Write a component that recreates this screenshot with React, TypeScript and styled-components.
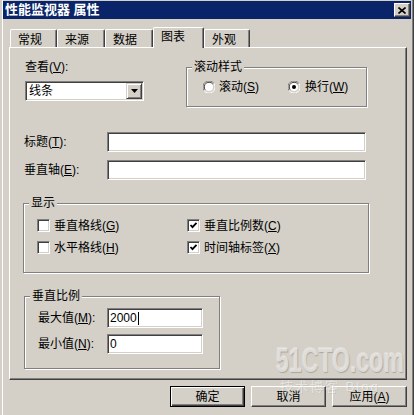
import React from "react";
import styled, { createGlobalStyle } from "styled-components";

const FACE = "#d4d0c8";
const SHADOW = "#808080";
const DARK = "#404040";

const GlobalStyle = createGlobalStyle`
  html, body { margin: 0; padding: 0; background: ${FACE}; }
  body {
    font-family: "Liberation Sans", "Noto Sans CJK SC", sans-serif;
    font-size: 12px;
    color: #000;
  }
  #root { width: 414px; height: 415px; overflow: hidden; }
`;

const Window = styled.div`
  position: relative;
  box-sizing: border-box;
  width: 414px;
  height: 415px;
  padding: 1px 3px 0;
  background: ${FACE};
  box-shadow: inset 2px 0 0 ${FACE}, inset 3px 0 0 #fff, inset -1px 0 0 ${DARK},
    inset -2px 0 0 ${SHADOW};
  overflow: hidden;
`;

const TitleBar = styled.div`
  display: flex;
  align-items: center;
  justify-content: space-between;
  height: 18px;
  padding: 0 1px 0 2px;
  background: #0a246a;
  color: #fff;
`;

const Title = styled.span`
  font-weight: bold;
  font-size: 13px;
  line-height: 14px;
`;

const CloseButton = styled.div`
  box-sizing: border-box;
  width: 16px;
  height: 14px;
  display: flex;
  align-items: center;
  justify-content: center;
  background: ${FACE};
  border-top: 1px solid #fff;
  border-left: 1px solid #fff;
  border-right: 1px solid ${DARK};
  border-bottom: 1px solid ${DARK};
  box-shadow: inset -1px -1px 0 ${SHADOW};
`;

const Body = styled.div`
  padding: 8px 4px 0 6px;
`;

const TabStrip = styled.div`
  display: flex;
  align-items: flex-end;
  height: 20px;
  padding-left: 1px;
`;

const Tab = styled.div<{ $w: number; $active?: boolean }>`
  position: relative;
  z-index: ${(p) => (p.$active ? 2 : 1)};
  box-sizing: border-box;
  width: ${(p) => p.$w}px;
  height: ${(p) => (p.$active ? 21 : 18)}px;
  margin-bottom: ${(p) => (p.$active ? -1 : 0)}px;
  padding: ${(p) => (p.$active ? 2 : 3)}px 0 0 7px;
  line-height: 14px;
  background: ${FACE};
  border-top: 1px solid #fff;
  border-left: 1px solid #fff;
  border-right: 1px solid ${DARK};
  border-top-left-radius: 2px;
  border-top-right-radius: 2px;
  box-shadow: inset -1px 0 0 ${SHADOW};
  white-space: nowrap;
`;

const Panel = styled.div`
  box-sizing: border-box;
  height: 333px;
  background: ${FACE};
  border-top: 1px solid #fff;
  border-left: 1px solid #fff;
  border-right: 1px solid ${DARK};
  border-bottom: 1px solid ${DARK};
  box-shadow: inset -1px -1px 0 ${SHADOW};
`;

const TopRow = styled.div`
  display: flex;
  align-items: flex-start;
  padding: 12px 0 0 15px;
`;

const ViewColumn = styled.div`
  display: flex;
  flex-direction: column;
  width: 119px;
`;

const Label = styled.span`
  line-height: 14px;
  white-space: nowrap;
`;

const Mnemonic = styled.span`
  text-decoration: underline;
`;

const Sunken = styled.div<{ $w: number }>`
  box-sizing: border-box;
  width: ${(p) => p.$w}px;
  height: 20px;
  background: #fff;
  border-top: 1px solid ${SHADOW};
  border-left: 1px solid ${SHADOW};
  border-right: 1px solid #fff;
  border-bottom: 1px solid #fff;
  box-shadow: inset 1px 1px 0 ${DARK}, inset -1px -1px 0 ${FACE};
`;

const Select = styled(Sunken)`
  margin-top: 7px;
  display: flex;
  align-items: center;
  padding: 1px;
`;

const SelectText = styled.span`
  flex: 1;
  padding-left: 2px;
  line-height: 14px;
`;

const DropButton = styled.div`
  box-sizing: border-box;
  width: 16px;
  height: 16px;
  display: flex;
  align-items: center;
  justify-content: center;
  background: ${FACE};
  border-top: 1px solid ${FACE};
  border-left: 1px solid ${FACE};
  border-right: 1px solid ${DARK};
  border-bottom: 1px solid ${DARK};
  box-shadow: inset 1px 1px 0 #fff, inset -1px -1px 0 ${SHADOW};
`;

const TextBox = styled(Sunken)`
  display: flex;
  align-items: center;
  padding: 0 2px;
  line-height: 14px;
`;

const Caret = styled.span`
  display: inline-block;
  width: 1px;
  height: 13px;
  margin-left: 1px;
  background: #000;
`;

const GroupBox = styled.div<{ $w: number; $h: number; $mt: number; $ml: number }>`
  box-sizing: border-box;
  width: ${(p) => p.$w}px;
  height: ${(p) => p.$h}px;
  margin-top: ${(p) => p.$mt}px;
  margin-left: ${(p) => p.$ml}px;
  border: 1px solid ${SHADOW};
  box-shadow: inset 1px 1px 0 #fff, 1px 1px 0 #fff;
`;

const Legend = styled.div`
  width: fit-content;
  margin: -8px 0 -6px 5px;
  padding: 0 2px;
  line-height: 14px;
  background: ${FACE};
`;

const RadioRow = styled.div`
  display: grid;
  grid-template-columns: 85px auto;
  padding: 12px 0 0 16px;
`;

const OptionItem = styled.div<{ $gap: number; $h: number }>`
  display: flex;
  align-items: center;
  gap: ${(p) => p.$gap}px;
  height: ${(p) => p.$h}px;
  line-height: 14px;
  white-space: nowrap;
`;

const CheckGrid = styled.div`
  display: grid;
  grid-template-columns: 150px auto;
  row-gap: 9px;
  padding: 15px 0 0 13px;
`;

const CheckBox = styled.div`
  box-sizing: border-box;
  width: 13px;
  height: 13px;
  flex: none;
  display: flex;
  align-items: center;
  justify-content: center;
  background: #fff;
  border-top: 1px solid ${SHADOW};
  border-left: 1px solid ${SHADOW};
  border-right: 1px solid #fff;
  border-bottom: 1px solid #fff;
  box-shadow: inset 1px 1px 0 ${DARK}, inset -1px -1px 0 ${FACE};
`;

const FieldRow = styled.div<{ $mt: number; $pl: number; $lw: number }>`
  display: flex;
  align-items: center;
  margin-top: ${(p) => p.$mt}px;
  padding-left: ${(p) => p.$pl}px;

  & > ${Label} {
    width: ${(p) => p.$lw}px;
  }
`;

const ScaleRows = styled.div`
  padding: 11px 0 0 0;
`;

const ButtonRow = styled.div`
  display: flex;
  justify-content: flex-end;
  gap: 6px;
  margin-top: 6px;
`;

const Button = styled.div<{ $default?: boolean }>`
  box-sizing: border-box;
  width: 75px;
  height: 21px;
  display: flex;
  align-items: center;
  justify-content: center;
  line-height: 14px;
  background: ${FACE};
  ${(p) =>
    p.$default
      ? `border: 1px solid #000;
         box-shadow: inset 1px 1px 0 #fff, inset -1px -1px 0 ${DARK}, inset -2px -2px 0 ${SHADOW};`
      : `border-top: 1px solid #fff;
         border-left: 1px solid #fff;
         border-right: 1px solid ${DARK};
         border-bottom: 1px solid ${DARK};
         box-shadow: inset -1px -1px 0 ${SHADOW};`}
`;

const Watermark = styled.div`
  position: absolute;
  left: 276px;
  top: 342px;
  width: 132px;
  pointer-events: none;
`;

const WatermarkLogo = styled.div`
  font-family: "Liberation Sans", sans-serif;
  font-weight: bold;
  font-size: 35px;
  line-height: 35px;
  white-space: nowrap;
  transform: scaleX(0.66);
  transform-origin: left top;
  color: rgba(236, 234, 230, 0.75);
  text-shadow: 1px 1px 1px rgba(0, 0, 0, 0.2), -1px -1px 0 rgba(255, 255, 255, 0.3);
`;

const WatermarkSub = styled.div`
  margin: 3px 0 0 4px;
  font-size: 13px;
  line-height: 14px;
  white-space: nowrap;
  letter-spacing: 2px;
  color: rgba(255, 255, 255, 0.45);
  text-shadow: 1px 1px 0 rgba(0, 0, 0, 0.08);
`;

const CheckMark = () => (
  <svg width="9" height="9" viewBox="0 0 9 9">
    <polyline points="1.5,4 3.5,6.2 7.5,1.8" fill="none" stroke="#000" strokeWidth="1.8" />
  </svg>
);

const Radio = ({ checked }: { checked?: boolean }) => (
  <svg width="12" height="12" viewBox="0 0 12 12" style={{ flex: "none" }}>
    <path d="M11 2.5 A5.5 5.5 0 0 0 1 9.5" fill="none" stroke={SHADOW} />
    <path d="M9.8 3.2 A4.5 4.5 0 0 0 2.2 8.8" fill="none" stroke={DARK} />
    <path d="M1 9.5 A5.5 5.5 0 0 0 11 2.5" fill="none" stroke="#fff" />
    <circle cx="6" cy="6" r="4" fill="#fff" />
    {checked && <circle cx="6" cy="6" r="2" fill="#000" />}
  </svg>
);

const Item = ({ label, m, checked }: { label: string; m: string; checked?: boolean }) => (
  <OptionItem $gap={4} $h={13}>
    <CheckBox>{checked && <CheckMark />}</CheckBox>
    <span>
      {label}(<Mnemonic>{m}</Mnemonic>)
    </span>
  </OptionItem>
);

export default function App() {
  return (
    <>
      <GlobalStyle />
      <Window>
        <TitleBar>
          <Title>性能监视器 属性</Title>
          <CloseButton>
            <svg width="8" height="7" viewBox="0 0 8 7">
              <path d="M0.5 0.5 L7.5 6.5 M7.5 0.5 L0.5 6.5" stroke="#000" strokeWidth="1.6" />
            </svg>
          </CloseButton>
        </TitleBar>
        <Body>
          <TabStrip>
            <Tab $w={47}>常规</Tab>
            <Tab $w={48}>来源</Tab>
            <Tab $w={48}>数据</Tab>
            <Tab $w={51} $active>
              图表
            </Tab>
            <Tab $w={46}>外观</Tab>
          </TabStrip>
          <Panel>
            <TopRow>
              <ViewColumn>
                <Label>
                  查看(<Mnemonic>V</Mnemonic>):
                </Label>
                <Select $w={119}>
                  <SelectText>线条</SelectText>
                  <DropButton>
                    <svg width="7" height="4" viewBox="0 0 7 4">
                      <path d="M0 0 H7 L3.5 4 Z" fill="#000" />
                    </svg>
                  </DropButton>
                </Select>
              </ViewColumn>
              <GroupBox $w={181} $h={40} $mt={7} $ml={42}>
                <Legend>滚动样式</Legend>
                <RadioRow>
                  <OptionItem $gap={4} $h={14}>
                    <Radio />
                    <span>
                      滚动(<Mnemonic>S</Mnemonic>)
                    </span>
                  </OptionItem>
                  <OptionItem $gap={5} $h={14}>
                    <Radio checked />
                    <span>
                      换行(<Mnemonic>W</Mnemonic>)
                    </span>
                  </OptionItem>
                </RadioRow>
              </GroupBox>
            </TopRow>

            <FieldRow $mt={25} $pl={14} $lw={83}>
              <Label>
                标题(<Mnemonic>T</Mnemonic>):
              </Label>
              <TextBox $w={259} />
            </FieldRow>
            <FieldRow $mt={8} $pl={14} $lw={83}>
              <Label>
                垂直轴(<Mnemonic>E</Mnemonic>):
              </Label>
              <TextBox $w={259} />
            </FieldRow>

            <GroupBox $w={346} $h={70} $mt={23} $ml={13}>
              <Legend>显示</Legend>
              <CheckGrid>
                <Item label="垂直格线" m="G" />
                <Item label="垂直比例数" m="C" checked />
                <Item label="水平格线" m="H" />
                <Item label="时间轴标签" m="X" checked />
              </CheckGrid>
            </GroupBox>

            <GroupBox $w={196} $h={73} $mt={23} $ml={14}>
              <Legend>垂直比例</Legend>
              <ScaleRows>
                <FieldRow $mt={0} $pl={13} $lw={69}>
                  <Label>
                    最大值(<Mnemonic>M</Mnemonic>):
                  </Label>
                  <TextBox $w={96}>
                    2000
                    <Caret />
                  </TextBox>
                </FieldRow>
                <FieldRow $mt={6} $pl={13} $lw={69}>
                  <Label>
                    最小值(<Mnemonic>N</Mnemonic>):
                  </Label>
                  <TextBox $w={96}>0</TextBox>
                </FieldRow>
              </ScaleRows>
            </GroupBox>
          </Panel>
          <ButtonRow>
            <Button $default>确定</Button>
            <Button>取消</Button>
            <Button>
              应用(<Mnemonic>A</Mnemonic>)
            </Button>
          </ButtonRow>
        </Body>
        <Watermark>
          <WatermarkLogo>51CTO.com</WatermarkLogo>
          <WatermarkSub>技术博客 Blog</WatermarkSub>
        </Watermark>
      </Window>
    </>
  );
}
